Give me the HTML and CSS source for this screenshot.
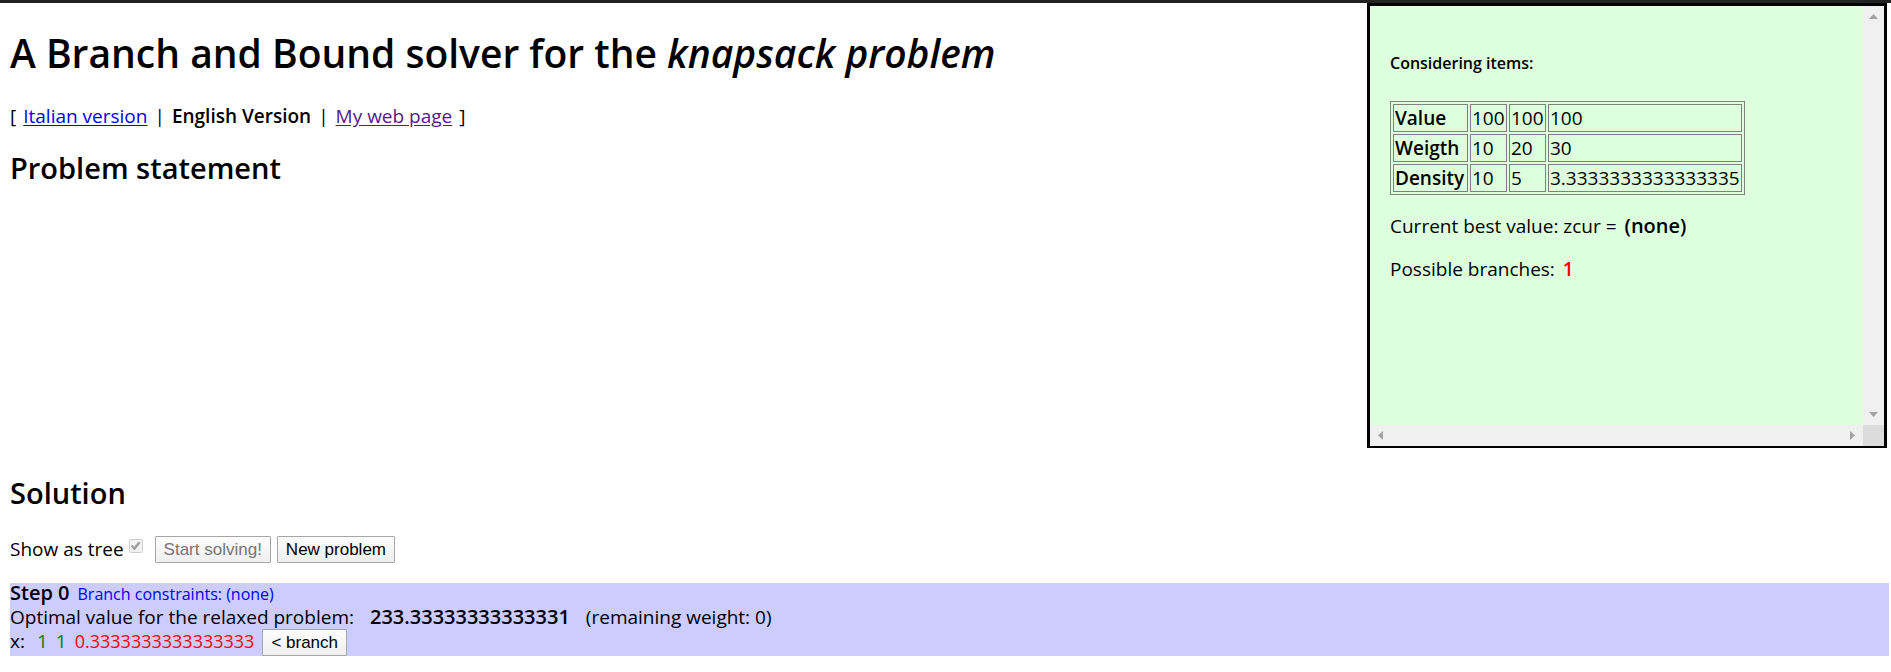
FILE: index.html
```html
<!DOCTYPE html>
<html lang="en">
<head>
<meta charset="utf-8">
<title>A Branch and Bound solver for the knapsack problem</title>
<link rel="stylesheet" href="styles.css">
</head>
<body>
<div class="top-rule"></div>
<div class="intro">
  <header class="heading">
    <h1 class="title">A Branch and Bound solver for the <em>knapsack problem</em></h1>
    <nav class="versions">
      <span>[</span>
      <a class="link" href="#italian">Italian version</a>
      <span>|</span>
      <strong class="current">English Version</strong>
      <span>|</span>
      <a class="link visited" href="#home">My web page</a>
      <span>]</span>
    </nav>
    <h2 class="subtitle">Problem statement</h2>
  </header>
  <aside class="panel">
    <div class="panel-body">
      <h5 class="panel-title">Considering items:</h5>
      <table class="items">
        <tr><th class="name" scope="row">Value</th><td class="num">100</td><td class="num">100</td><td class="wide">100</td></tr>
        <tr><th scope="row">Weigth</th><td>10</td><td>20</td><td>30</td></tr>
        <tr><th scope="row">Density</th><td>10</td><td>5</td><td>3.3333333333333335</td></tr>
      </table>
      <p class="fact"><span>Current best value: zcur =</span><b class="strong">(none)</b></p>
      <p class="fact"><span>Possible branches:</span><b class="count">1</b></p>
    </div>
    <div class="scroll-y">
      <svg width="9" height="5" viewBox="0 0 9 5"><path d="M0 5 4.500 0 9 5z" fill="#a3a3a3"/></svg>
      <svg width="9" height="5" viewBox="0 0 9 5"><path d="M0 0 4.500 5 9 0z" fill="#a3a3a3"/></svg>
    </div>
    <div class="scroll-x">
      <svg width="5" height="9" viewBox="0 0 5 9"><path d="M5 0 0 4.500 5 9z" fill="#a3a3a3"/></svg>
      <svg width="5" height="9" viewBox="0 0 5 9"><path d="M0 0 5 4.500 0 9z" fill="#a3a3a3"/></svg>
    </div>
    <div class="corner"></div>
  </aside>
</div>
<main class="solution">
  <h2 class="subtitle">Solution</h2>
  <form class="controls">
    <label class="tree-label" for="tree">Show as tree</label>
    <input class="tick" type="checkbox" id="tree" checked disabled>
    <button class="button" type="button" disabled>Start solving!</button>
    <button class="button" type="button">New problem</button>
  </form>
  <section class="step">
    <div class="line"><b class="strong">Step 0</b><span class="constraints">Branch constraints: (none)</span></div>
    <div class="line optimum"><span>Optimal value for the relaxed problem:</span><b class="strong">233.33333333333331</b><span>(remaining weight: 0)</span></div>
    <div class="line"><span class="x">x:</span><span class="whole">1</span><span class="whole">1</span><span class="fraction">0.3333333333333333</span><button class="button" type="button">&lt; branch</button></div>
  </section>
</main>
</body>
</html>
```
FILE: styles.css
```css
* { box-sizing: border-box; }
body {
  margin: 0;
  background: #fff;
  color: #000;
  font: 19px/23px "Trebuchet MS", "Open Sans", sans-serif;
}
.top-rule { height: 3px; background: #222; }
.intro { display: flex; align-items: flex-start; padding-right: 4px; }
.heading { flex: 1; padding: 26px 0 0 10px; }
.title { margin: 0; font-size: 39px; line-height: 48px; font-weight: 600; }
.versions { display: flex; gap: 7px; margin-top: 28px; }
.link { color: #00e; text-underline-offset: 2px; }
.visited { color: #551a8b; }
.current { font-weight: 600; }
.strong { font-size: 20px; line-height: 20px; font-weight: 600; }
.subtitle { margin: 0; font-size: 29px; line-height: 35px; font-weight: 600; }
.heading .subtitle { margin-top: 22px; }

.panel {
  display: grid;
  grid-template: 1fr 21px / 1fr 21px;
  flex: 0 0 520px;
  min-height: 445px;
  border: solid #000;
  border-width: 3px 3px 2px;
  background: #dfd;
}
.panel-body { padding: 46px 20px 20px; }
.panel-title { margin: 0 0 26px; font-size: 16px; line-height: 23px; font-weight: 600; }
.items { border: 1px solid #808080; border-spacing: 2px; }
.items th, .items td {
  height: 28px;
  padding: 0 1px;
  border: 1px solid #808080;
  line-height: 26px;
  text-align: left;
}
.items th { font-weight: 600; }
.items .name { width: 75px; }
.items .num { width: 37px; }
.items .wide { width: 191px; }
.fact { display: flex; gap: 8px; align-items: baseline; margin: 20px 0; }
.count { font-weight: 600; color: #f00; }
.scroll-y, .scroll-x { display: flex; align-items: center; justify-content: space-between; background: #f0f0f0; }
.scroll-y { flex-direction: column; padding: 8px 0; }
.scroll-x { padding: 0 8px; }
.corner { background: #dcdcdc; }

.solution { padding: 27px 2px 0 10px; }
.controls { display: flex; align-items: center; margin-top: 26px; }
.tick {
  appearance: none;
  display: grid;
  place-items: center;
  width: 14px;
  height: 14px;
  margin: 0 12px 7px 5px;
  border: 1px solid #d0d0d0;
  border-radius: 2px;
  background: #f2f2f2;
}
.tick::before {
  content: "";
  width: 10px;
  height: 9px;
  background: #a0a0a0;
  clip-path: polygon(0 52%, 18% 38%, 36% 58%, 80% 0, 100% 14%, 40% 100%);
}
.button {
  height: 27px;
  padding: 0 8px;
  border: 1px solid #a6a6a6;
  border-radius: 1px;
  background: linear-gradient(#fdfdfd, #efefef);
  color: #000;
  font: 17px/25px "Liberation Sans", Arial, sans-serif;
}
.button:disabled { color: #767676; }
.controls .button { margin-right: 6px; }
.step { margin-top: 20px; background: #ccf; }
.line { display: flex; align-items: baseline; gap: 8px; }
.optimum { gap: 16px; }
.constraints { font-size: 16px; color: #00f; }
.x { padding-right: 4px; }
.whole { color: #008000; }
.fraction { font-size: 18px; color: #f00; }
```
